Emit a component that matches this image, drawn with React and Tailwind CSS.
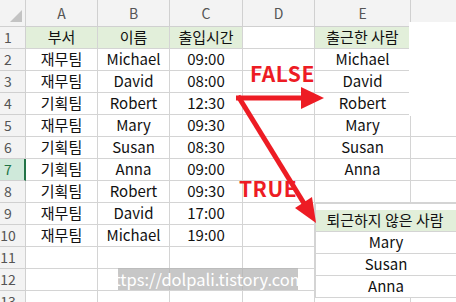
import React from 'react'

const rows = [
    ['부서', '이름', '출입시간', '', '출근한 사람'],
    ['재무팀', 'Michael', '09:00', '', 'Michael'],
    ['재무팀', 'David', '08:00', '', 'David'],
    ['기획팀', 'Robert', '12:30', '', 'Robert'],
    ['재무팀', 'Mary', '09:30', '', 'Mary'],
    ['기획팀', 'Susan', '08:30', '', 'Susan'],
    ['기획팀', 'Anna', '09:00', '', 'Anna'],
    ['기획팀', 'Robert', '09:30', '', ''],
    ['재무팀', 'David', '17:00', '', ''],
    ['재무팀', 'Michael', '19:00', '', ''],
    ['', '', '', '', ''],
    ['', '', '', '', ''],
    ['', '', '', '', ''],
]

const widths = ['w-[72px]', 'w-[72px]', 'w-[73px]', 'w-[72px]', 'w-[96px]']
const letters = ['A', 'B', 'C', 'D', 'E']

const App = () => {
    return (
        <div className="relative w-[456px] h-[302px] overflow-hidden bg-white font-['Noto_Sans_CJK_KR',sans-serif] text-[#111]">
            {/* column header */}
            <div className="flex h-[27px] bg-[#f3f3f3] border-b border-[#d0d0d0]">
                <div className="relative w-[26px] shrink-0 border-r border-[#d0d0d0]">
                    <svg className="absolute left-0 top-0" width="26" height="26">
                        <polygon points="22,10 22,22 10,22" fill="#c3c3c3" />
                    </svg>
                </div>
                {letters.map((l, i) => (
                    <div key={l} className={`${widths[i]} shrink-0 border-r border-[#d0d0d0] flex items-end justify-center pb-[2px] text-[14px] text-[#555]`}>{l}</div>
                ))}
                <div className="flex-1" />
            </div>

            {rows.map((r, ri) => (
                <div key={ri} className="flex h-[22px]">
                    {ri === 6 ? (
                        <div className="w-[26px] shrink-0 bg-[#cfe9da] border-r-2 border-[#217346] border-b border-b-[#d0d0d0] flex items-center justify-center pr-[8px] text-[14px] text-[#217346]">{ri + 1}</div>
                    ) : (
                        <div className="w-[26px] shrink-0 bg-[#f3f3f3] border-r border-b border-[#d0d0d0] flex items-center justify-center pr-[9px] text-[14px] text-[#555]">{ri + 1}</div>
                    )}
                    {r.map((c, ci) => (
                        <div key={ci} className={`${widths[ci]} shrink-0 border-r border-b border-[#d4d4d4] flex items-center justify-center whitespace-nowrap text-[15px] ${ri === 0 && ci !== 3 ? 'bg-[#e2efda]' : ''}`}>{c}</div>
                    ))}
                    <div className="flex-1 border-b border-[#d4d4d4]" />
                </div>
            ))}

            {/* pasted white block over F1:F4 */}
            <div className="absolute left-[409px] top-[22px] w-[47px] h-[94px] bg-white" />

            {/* pasted result table */}
            <div className="absolute left-[315px] top-[203px] w-[141px] bg-white border-l border-t border-[#d4d4d4] pt-[6px]">
                <div className="h-[22px] bg-[#e2efda] border-b border-[#d4d4d4] flex items-center justify-center pr-[2px] text-[15px] whitespace-nowrap">퇴근하지 않은 사람</div>
                {['Mary', 'Susan', 'Anna'].map((n) => (
                    <div key={n} className="h-[22px] border-b border-[#d4d4d4] flex items-center justify-center text-[15px]">{n}</div>
                ))}
            </div>

            {/* watermark */}
            <div className="absolute left-[118px] top-[268px] w-[180px] h-[22px] bg-[#b4b4b4]/75 flex items-center justify-center text-white text-[16.5px] whitespace-nowrap">https://dolpali.tistory.com/</div>

            {/* arrows */}
            <svg className="absolute left-0 top-0 pointer-events-none" width="456" height="302">
                <line x1="236" y1="98" x2="304" y2="98" stroke="#ed1c24" strokeWidth="5" />
                <polygon points="301,87 324,98 301,109" fill="#ed1c24" />
                <line x1="238" y1="96" x2="305" y2="205" stroke="#ed1c24" strokeWidth="5" />
                <polygon points="295,208 316,223 312,197" fill="#ed1c24" />
            </svg>
            <div className="absolute left-[250px] top-[63px] text-[21px] font-bold text-[#ed1c24] leading-none tracking-[0.5px]">FALSE</div>
            <div className="absolute left-[239px] top-[178px] text-[21px] font-bold text-[#ed1c24] leading-none tracking-[0.5px]">TRUE</div>
        </div>
    )
}

export default App
